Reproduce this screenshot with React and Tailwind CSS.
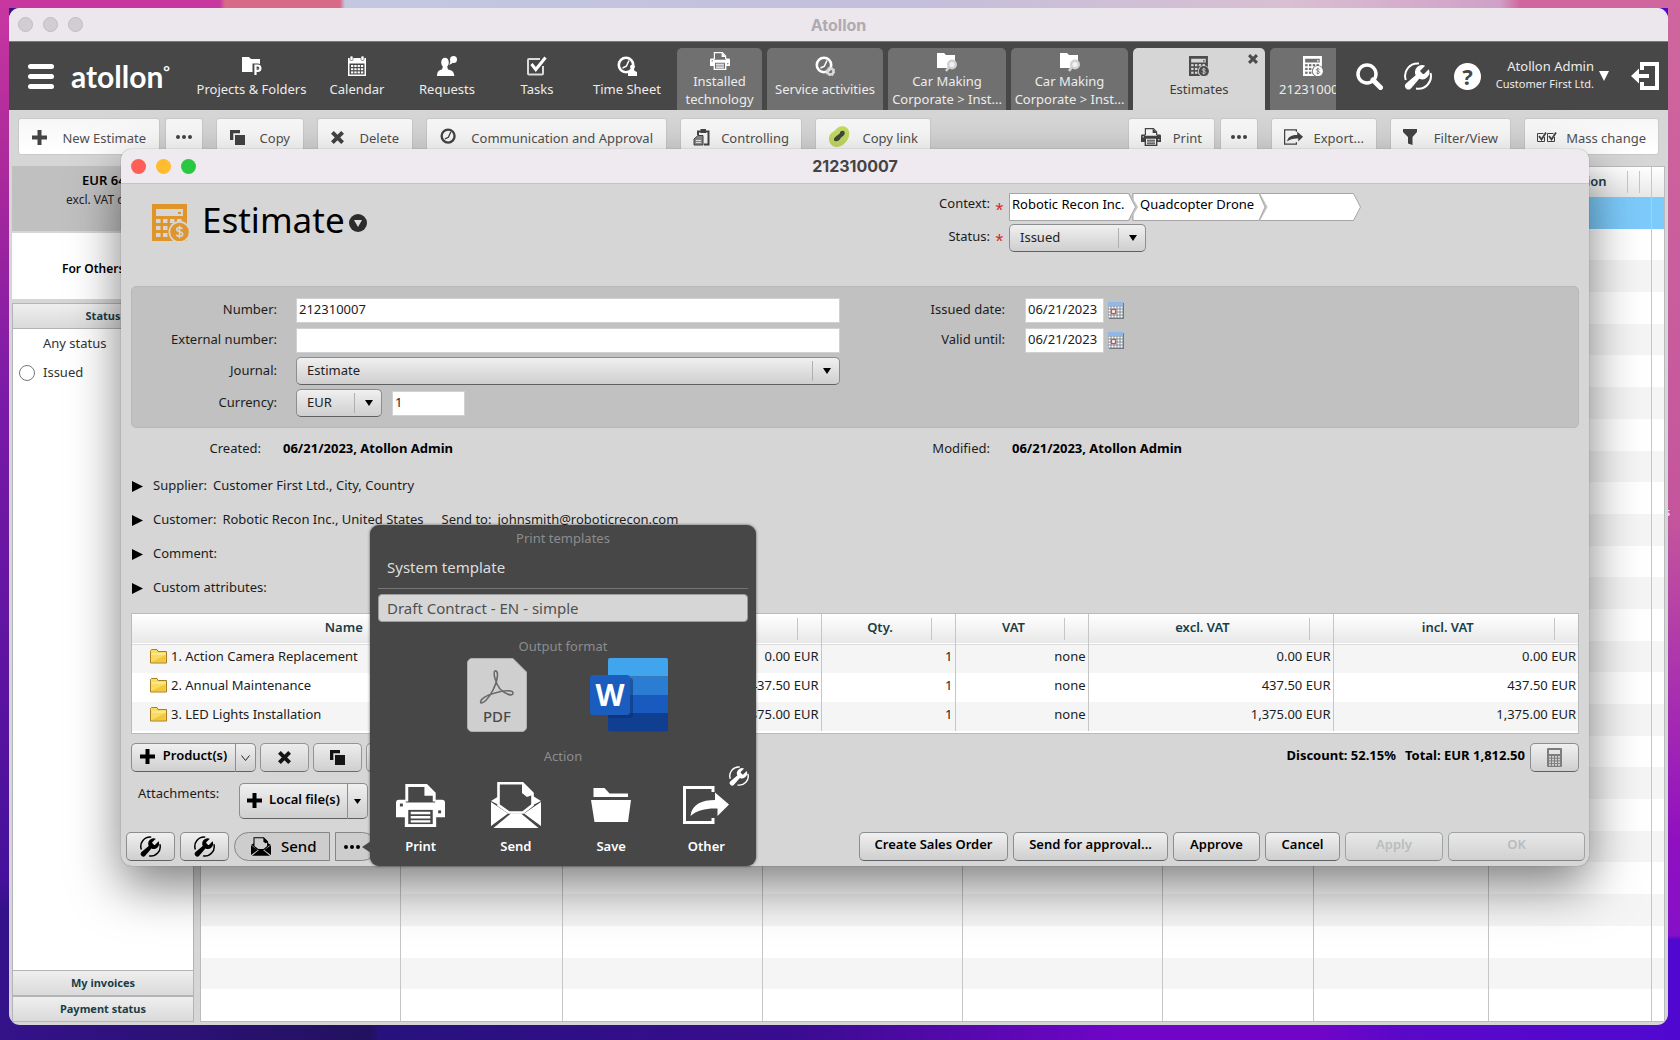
import clsx from 'clsx';

/* ---------- icons ---------- */

function FolderBadgeIcon({ badge }) {
  return (
    <svg width="20" height="20" viewBox="0 0 20 20" fill="currentColor">
      <path d="M0 1h7l2 2h9v13H0z" />
      {badge === 'P' ? (
        <g fill="none">
          <path d="M13 19.500V10h3a2.800 2.800 0 0 1 0 5.600h-3" stroke="#474747" strokeWidth="5" />
          <path d="M13.500 19V9.500h2.200a2.700 2.700 0 0 1 0 5.400h-2.200" stroke="currentColor" strokeWidth="2.200" />
        </g>
      ) : (
        <g>
          <circle cx="15" cy="12.500" r="5" fill="#d0d0d0" />
          <circle cx="15" cy="12.500" r="2.600" fill="#f2f2f2" />
          <path d="M12 15l-3 4" stroke="#d0d0d0" strokeWidth="2.500" />
        </g>
      )}
    </svg>
  );
}

function CalendarIcon() {
  return (
    <svg width="20" height="20" viewBox="0 0 20 20" fill="currentColor">
      <path fillRule="evenodd" d="M1 2h18v18H1zM2.500 7.500v11h15v-11z" />
      <rect x="3" y="0" width="3" height="4.500" rx="1" stroke="#474747" strokeWidth=".6" />
      <rect x="14" y="0" width="3" height="4.500" rx="1" stroke="#474747" strokeWidth=".6" />
      {[9, 12.200, 15.400].map((y) =>
        [4, 7.300, 10.600, 13.900].map((x) => <rect key={`${x}-${y}`} x={x} y={y} width="2.300" height="2" />)
      )}
    </svg>
  );
}

function RequestIcon() {
  return (
    <svg width="20" height="20" viewBox="0 0 20 20" fill="currentColor">
      <ellipse cx="8" cy="6.500" rx="3.800" ry="4.800" />
      <path d="M6 10h4l1 3.500c4 .8 6 2 6.300 6.500H0c.200-4.500 1.500-5.700 5-6.500z" />
      <circle cx="16.500" cy="3.600" r="3.500" />
      <path d="M13.500 5l-1.300 4 3.500-2z" />
    </svg>
  );
}

function TaskIcon() {
  return (
    <svg width="20" height="20" viewBox="0 0 20 20" fill="none" stroke="currentColor">
      <path d="M16 10v7.500a1 1 0 0 1-1 1H2a1 1 0 0 1-1-1V4a1 1 0 0 1 1-1h11" strokeWidth="2" opacity=".8" />
      <path d="M4.500 8l4.300 5.500L18.500 1.500" strokeWidth="3" />
    </svg>
  );
}

function ClockIcon({ badge, size = 20 }) {
  return (
    <svg width={size} height={size} viewBox="0 0 20 20" fill="currentColor">
      <circle cx="9" cy="9" r="7.200" fill="none" stroke="currentColor" strokeWidth="2.600" />
      <path d="M12 4.500L9.300 10.300 5.500 12" fill="none" stroke="currentColor" strokeWidth="1.500" />
      {badge === 'person' && (
        <path d="M15.500 8.500a2.400 2.400 0 0 1 1.500 4.300c0 1.700.400 2.300 3 3.200v4h-9v-4c2.500-.900 3-1.500 3-3.200a2.400 2.400 0 0 1 1.500-4.300z" />
      )}
      {badge === 'gear' && (
        <g>
          <circle cx="15.500" cy="15.500" r="3" fill="none" stroke="#d8d8d8" strokeWidth="2.500" />
          <circle cx="15.500" cy="15.500" r="4.100" fill="none" stroke="#d8d8d8" strokeWidth="1.400" strokeDasharray="1.600 1.600" />
        </g>
      )}
    </svg>
  );
}

function PrinterIcon({ width = 20, height = 18, hole = '#707070' }) {
  return (
    <svg width={width} height={height} viewBox="0 0 50 44" preserveAspectRatio="none" fill="currentColor">
      <path d="M11 18V1.500h20l8 8V18" fill={hole} stroke="currentColor" strokeWidth="3" />
      <path d="M29 1l11 11H29z" />
      <path d="M3 16h7v3h30v-3h7a3 3 0 0 1 3 3v15H0V19a3 3 0 0 1 3-3z" />
      <rect x="4" y="20" width="3" height="3" fill={hole} />
      <rect x="43" y="27" width="3" height="3" fill={hole} />
      <path d="M9 24h32v20H9z" />
      <path d="M12.500 26.500h25V41h-25z" fill={hole} />
      <path d="M15 28.500h20v2.500H15zM15 32.700h20v2.500H15zM15 37h20v2.500H15z" />
    </svg>
  );
}

function MailIcon({ width = 50, height = 46, hole = '#474747' }) {
  return (
    <svg width={width} height={height} viewBox="0 0 50 46" fill="currentColor">
      <path d="M0 19l8-5v9zM50 19l-8-5v9z" />
      <path d="M0 20l17 11.500L0 44zM50 20L33 31.500 50 44z" />
      <path d="M2.500 46L20 31.500h10L47.500 46z" />
      <path d="M7.500 23V1.300h24l10 10V23l-9.500 7.500H18z" fill={hole} stroke="currentColor" strokeWidth="2.600" />
      <path d="M31 1l11.500 11.500L36 15l-5-4z" />
    </svg>
  );
}

function SaveFolderIcon() {
  return (
    <svg width="40" height="34" viewBox="0 0 40 34" fill="currentColor">
      <path d="M2.500 9V0h11l5 5.500H37V9z" />
      <path d="M0 12h40l-3 22H3.500z" />
    </svg>
  );
}

function ShareIcon({ width = 46, height = 38 }) {
  return (
    <svg width={width} height={height} viewBox="0 0 46 38" fill="currentColor">
      <path d="M30 6V1.500H1.500v35H30V32" fill="none" stroke="currentColor" strokeWidth="3" />
      <path d="M7.500 30C9 18 19 14 32 14V6.500L46 18.500 34.500 30v-7.500C24 22 14 24 7.500 30z" />
    </svg>
  );
}

function WrenchIcon({ size = 28 }) {
  return (
    <svg width={size} height={size} viewBox="0 0 28 28" fill="currentColor">
      <path d="M1.800 18A12.500 12.500 0 0 1 15 1.500M26.500 11A12.500 12.500 0 0 1 12 26.500" fill="none" stroke="currentColor" strokeWidth="2" />
      <path
        transform="translate(-1 .500) scale(1.200)"
        d="M14.700 6.300a1 1 0 0 0 0 1.400l1.600 1.600a1 1 0 0 0 1.400 0l3.770-3.770a6 6 0 0 1-7.940 7.940l-6.910 8.100a2.600 2.600 0 0 1-4.100-4.100l8.010-6.910a6 6 0 0 1 7.940-7.940l-3.760 3.760z"
      />
    </svg>
  );
}

function EstimateIcon({ size = 20, hole = '#707070' }) {
  return (
    <svg width={size} height={size} viewBox="0 0 37 37" fill="currentColor">
      <path d="M0 0h35v37H0z" />
      <path d="M4 5h27v7H4z" fill={hole} />
      <path d="M26 8h3v2h-3z" />
      {[15, 22, 29].map((y) =>
        [4, 11, 18, 25].map((x) => <rect key={`${x}-${y}`} x={x} y={y} width="4.500" height="4" fill={hole} />)
      )}
      <circle cx="27.500" cy="28" r="11" fill={hole} />
      <circle cx="27.500" cy="28" r="9.300" />
      <path
        d="M30.500 25.200c-.600-1.200-1.600-1.600-3-1.600-1.700 0-2.800.700-2.800 2 0 2.900 6 1.500 6 4.600 0 1.400-1.300 2.200-3.200 2.200-1.600 0-2.700-.600-3.200-1.800M27.500 21.700v12.600"
        fill="none"
        stroke={hole}
        strokeWidth="1.600"
      />
    </svg>
  );
}

function PlusIcon() {
  return (
    <svg width="15" height="15" viewBox="0 0 15 15" fill="currentColor">
      <path d="M5.500 0h4v5.500H15v4H9.500V15h-4V9.500H0v-4h5.500z" />
    </svg>
  );
}

function CrossIcon({ size = 15 }) {
  return (
    <svg width={size} height={size} viewBox="0 0 14 14" fill="none" stroke="currentColor" strokeWidth="4.200">
      <path d="M1.500 1.500l11 11M12.500 1.500l-11 11" />
    </svg>
  );
}

function CopyIcon() {
  return (
    <svg width="15" height="15" viewBox="0 0 15 15" fill="currentColor">
      <path d="M0 0h10v3.300H3.300V10H0z" />
      <path d="M5 5h10v10H5z" />
    </svg>
  );
}

function DotsIcon() {
  return (
    <svg width="16" height="4" viewBox="0 0 16 4" fill="currentColor">
      <circle cx="2" cy="2" r="2" />
      <circle cx="8" cy="2" r="2" />
      <circle cx="14" cy="2" r="2" />
    </svg>
  );
}

function ClipboardIcon() {
  return (
    <svg width="17" height="17" viewBox="0 0 17 17" fill="none" stroke="currentColor">
      <path d="M5 6V2.500h10.500v13H11" strokeWidth="2" />
      <path d="M7.500 0h5.500v4H7.500z" fill="currentColor" stroke="none" />
      <path d="M1 10l4-3.500h5v9.500H1z" fill="#8b8b8b" strokeWidth="1" />
      <path d="M3 11.500h5M3 13.500h5" stroke="#eee" />
    </svg>
  );
}

function CopyLinkIcon() {
  return (
    <svg width="22" height="22" viewBox="0 0 22 22">
      <path d="M10 1.500c4-2.500 10-1 11 4 1 4-1 9-5 12.500-5 4-11 4-14-1C0 13 1 8.500 4 6.500c2.500-1 3-3 6-5z" fill="#c5dc62" />
      <path d="M12 7c0-2.500 3.500-3 4.500-1.200 1 2.500-1.500 4.700-3.500 5.700-1.500 4-6.500 5-7 2.500-.5-3 4-4.500 6-7z" fill="#3f4a3a" />
    </svg>
  );
}

function FunnelIcon() {
  return (
    <svg width="14" height="16" viewBox="0 0 14 16" fill="currentColor">
      <path d="M0 0h14v3L9.500 8v8L5 14.500V8L0 3z" />
    </svg>
  );
}

function DoubleCheckIcon() {
  return (
    <svg width="20" height="10" viewBox="0 0 20 10" fill="none" stroke="currentColor">
      <path d="M7.500 5v4.500H.5v-8h6M17.500 5v4.500h-7v-8h6" />
      <path d="M2 4l2.500 3.500L9 .5M12 4l2.500 3.500L19 .5" strokeWidth="1.800" />
    </svg>
  );
}

function MiniCalendarIcon() {
  return (
    <svg width="16" height="17" viewBox="0 0 16 17">
      <path d="M1 1h15v16H1z" fill="#74777c" />
      <path d="M0 0h15v4.500H0z" fill="#8fb8ea" />
      <path d="M0 4h15v12H0z" fill="#7b8b94" />
      {[4.500, 7.500, 10.500, 13.500].map((y) =>
        [0.5, 3.500, 6.500, 9.500, 12.500].map((x) => <rect key={`${x}-${y}`} x={x} y={y} width="2" height="2" fill="#fff" />)
      )}
      <rect x="3.500" y="7.500" width="4" height="4" fill="#fff" stroke="#e0484a" strokeWidth="1.300" />
    </svg>
  );
}

function YellowFolderIcon() {
  return (
    <svg width="17" height="15" viewBox="0 0 17 15">
      <path d="M.5 2.500V1.500l1-1H7l1 2h8.500v11.500H.5z" fill="#f8dc62" stroke="#a97d22" />
      <path d="M1.500 5h14" stroke="#fff3b0" />
      <path d="M1.500 13L15.500 6v7z" fill="#f2c838" />
    </svg>
  );
}

function CalculatorIcon() {
  return (
    <svg width="15" height="19" viewBox="0 0 15 19">
      <path d="M0 1a1 1 0 0 1 1-1h13a1 1 0 0 1 1 1v17a1 1 0 0 1-1 1H1a1 1 0 0 1-1-1z" fill="#7d7d7d" />
      <path d="M2 2h11v4H2z" fill="#e4e4e4" />
      {[8, 10.700, 13.400, 16].map((y) =>
        [2, 5, 8, 11].map((x) => <rect key={`${x}-${y}`} x={x} y={y} width="2" height="1.700" fill="#d0d0d0" />)
      )}
    </svg>
  );
}

function DownTriangle({ width = 10, height = 6 }) {
  return (
    <svg width={width} height={height} viewBox="0 0 10 6" preserveAspectRatio="none" fill="currentColor">
      <path d="M0 0h10L5 6z" />
    </svg>
  );
}

function PdfIcon() {
  return (
    <svg width="60" height="74" viewBox="0 0 60 74">
      <path d="M5 .5h41L59.500 14v55a4.500 4.500 0 0 1-4.500 4.500H5A4.500 4.500 0 0 1 .5 69V5A4.500 4.500 0 0 1 5 .5z" fill="#cfcfcf" stroke="#b0b0b0" />
      <path
        d="M28 13c4-1 3 9-2 19-4 8-9 13-12 13-2-3 5-8 14-10 9-3 18-3 18 0 0 4-8 1-13-4-5-6-7-17-5-18z"
        fill="none"
        stroke="#6a6a6a"
        strokeWidth="1.600"
      />
      <text x="30" y="64" textAnchor="middle" fill="#4a4a4a" fontSize="15" fontFamily="Noto Sans" fontWeight="500">
        PDF
      </text>
    </svg>
  );
}

function WordIcon() {
  return (
    <svg width="78" height="74" viewBox="0 0 78 74">
      <path d="M18 18.500V2a2 2 0 0 1 2-2h56a2 2 0 0 1 2 2v16.500z" fill="#41a5ee" />
      <path d="M18 18.500h60V37H18z" fill="#2b7cd3" />
      <path d="M18 37h60v18H18z" fill="#185abd" />
      <path d="M18 55h60v16.500a2 2 0 0 1-2 2H20a2 2 0 0 1-2-2z" fill="#103f91" />
      <path d="M18 20h22a3 3 0 0 1 3 3v34a3 3 0 0 1-3 3H18z" fill="#0c2d6b" opacity=".5" />
      <rect x="0" y="17" width="40" height="40" rx="3" fill="#1a5dbe" />
      <text x="20" y="48" textAnchor="middle" fill="#fff" fontSize="30" fontFamily="Noto Sans" fontWeight="700">
        W
      </text>
    </svg>
  );
}

/* ---------- main window ---------- */

const modules = [
  { label: 'Calendar', icon: <CalendarIcon /> },
  { label: 'Requests', icon: <RequestIcon /> },
  { label: 'Tasks', icon: <TaskIcon /> },
  { label: 'Time Sheet', icon: <ClockIcon badge="person" /> },
];

const tabs = [
  { id: 1, lines: ['Installed', 'technology'], icon: <PrinterIcon />, width: 'w-[85px]' },
  { id: 2, lines: ['Service activities'], icon: <ClockIcon badge="gear" />, width: 'w-[116px]' },
  { id: 3, lines: ['Car Making', 'Corporate > Inst...'], icon: <FolderBadgeIcon badge="search" />, width: 'w-[118px]' },
  { id: 4, lines: ['Car Making', 'Corporate > Inst...'], icon: <FolderBadgeIcon badge="search" />, width: 'w-[117px]' },
  { id: 5, lines: ['Estimates'], icon: <EstimateIcon hole="#d6d6d6" />, width: 'w-[132px]', active: true },
  { id: 6, lines: ['212310007'], icon: <EstimateIcon />, width: 'w-[85px]' },
];

function ModuleButton({ icon, label, className }) {
  return (
    <button className={clsx('flex h-full shrink-0 flex-col items-center pt-[14px] text-[13px] leading-5 text-[#ececec]', className)}>
      <span className="text-white">{icon}</span>
      <span className="mt-[3px] whitespace-nowrap">{label}</span>
    </button>
  );
}

function Tab({ tab }) {
  const twoLines = tab.lines.length > 1;
  return (
    <button
      className={clsx(
        'relative flex h-[62px] shrink-0 flex-col items-center rounded-t-[5px] text-[13px]',
        tab.width,
        twoLines ? 'pt-1 leading-[18px]' : 'pt-2 leading-5',
        tab.active ? 'bg-[#d6d6d6] text-[#3c3c3c]' : 'bg-[#707070] text-[#ececec]'
      )}
    >
      <span className={clsx('h-5', tab.active ? 'text-[#4c4c4c]' : 'text-white')}>{tab.icon}</span>
      <span className={clsx('whitespace-nowrap', twoLines ? '' : 'mt-[3px]')}>
        {tab.lines.map((line) => (
          <span key={line} className="block">{line}</span>
        ))}
      </span>
      {tab.active && (
        <span className="absolute right-[7px] top-[6px] text-[#4c4c4c]">
          <CrossIcon size={10} />
        </span>
      )}
    </button>
  );
}

function TopNav() {
  return (
    <header className="flex h-[68px] shrink-0 items-center bg-[#474747] text-white">
      <button aria-label="Menu" className="ml-[19px] flex w-[26px] shrink-0 flex-col gap-[5px]">
        <span className="h-[5px] rounded-full bg-white" />
        <span className="h-[5px] rounded-full bg-white" />
        <span className="h-[5px] rounded-full bg-white" />
      </button>
      <a href="#" className="ml-[17px] flex w-[120px] shrink-0 items-start font-['Lato',sans-serif] text-[30px] leading-[34px] font-bold">
        atollon<span className="text-base leading-6">°</span>
      </a>
      <ModuleButton icon={<FolderBadgeIcon badge="P" />} label="Projects & Folders" className="w-[121px]" />
      {modules.map((m) => (
        <ModuleButton key={m.label} icon={m.icon} label={m.label} className="w-[90px]" />
      ))}
      <div className="ml-[5px] flex h-full min-w-0 flex-1 items-end gap-[5px] overflow-hidden">
        {tabs.map((tab) => (
          <Tab key={tab.id} tab={tab} />
        ))}
      </div>
      <div className="flex w-[332px] shrink-0 items-center pl-5 pr-[9px]">
        <button aria-label="Search">
          <svg width="27" height="27" viewBox="0 0 27 27" fill="none" stroke="currentColor">
            <circle cx="11" cy="11" r="9" strokeWidth="3.500" />
            <path d="M17 17l7.500 7.500" strokeWidth="5" strokeLinecap="round" />
          </svg>
        </button>
        <button aria-label="Settings" className="ml-[21px]">
          <WrenchIcon />
        </button>
        <button aria-label="Help" className="ml-[22px] flex size-[27px] items-center justify-center rounded-full bg-white text-[22px] leading-6 font-bold text-[#474747]">
          ?
        </button>
        <div className="ml-auto pb-[2px] text-right text-[#ececec]">
          <div className="text-[13px] leading-[18px]">Atollon Admin</div>
          <div className="text-[11px] leading-[18px]">Customer First Ltd.</div>
        </div>
        <button aria-label="Account menu" className="ml-[5px]">
          <DownTriangle width={10} height={10} />
        </button>
        <button aria-label="Log out" className="ml-[22px]">
          <svg width="28" height="28" viewBox="0 0 28 28">
            <path d="M11 8V2h15v24H11v-6" fill="none" stroke="currentColor" strokeWidth="4" />
            <path d="M0 14l8-7.500V12h10v4H8v5.500z" fill="currentColor" />
          </svg>
        </button>
      </div>
    </header>
  );
}

function ToolButton({ icon, children, label, className }) {
  return (
    <button
      aria-label={label}
      className={clsx(
        'flex h-[37px] shrink-0 items-center rounded-[3px] border border-[#cacaca] bg-gradient-to-b from-[#f7f7f7] to-white pt-px text-[13px] text-[#505050]',
        className
      )}
    >
      <span className="flex shrink-0 items-center text-[#444]">{icon}</span>
      {children && <span className="flex-1 pt-[3px] text-right whitespace-nowrap">{children}</span>}
    </button>
  );
}

function Toolbar() {
  return (
    <div className="flex shrink-0 px-[9px] pt-2 pb-[11px]">
      <ToolButton icon={<PlusIcon />} className="w-[142px] px-[13px]">New Estimate</ToolButton>
      <ToolButton icon={<DotsIcon />} label="More" className="ml-[5px] w-[38px] justify-center" />
      <ToolButton icon={<CopyIcon />} className="ml-[13px] w-[88px] px-[13px]">Copy</ToolButton>
      <ToolButton icon={<CrossIcon size={13} />} className="ml-[13px] w-[96px] px-[13px]">Delete</ToolButton>
      <ToolButton icon={<ClockIcon size={18} />} className="ml-[13px] w-[241px] px-[13px]">Communication and Approval</ToolButton>
      <ToolButton icon={<ClipboardIcon />} className="ml-[13px] w-[122px] px-3">Controlling</ToolButton>
      <ToolButton icon={<CopyLinkIcon />} className="ml-[13px] w-[116px] px-3">Copy link</ToolButton>
      <ToolButton icon={<PrinterIcon hole="#fafafa" />} className="ml-auto w-[87px] px-3">Print</ToolButton>
      <ToolButton icon={<DotsIcon />} label="More print options" className="ml-[5px] w-[38px] justify-center" />
      <ToolButton icon={<ShareIcon width={19} height={16} />} className="ml-[13px] w-[106px] px-3">Export...</ToolButton>
      <ToolButton icon={<FunnelIcon />} className="ml-[13px] w-[121px] px-3">Filter/View</ToolButton>
      <ToolButton icon={<DoubleCheckIcon />} className="ml-[13px] w-[135px] px-3">Mass change</ToolButton>
    </div>
  );
}

function SideHeading({ children }) {
  return (
    <button className="h-[26px] w-full shrink-0 border border-[#b1b5b7] bg-gradient-to-b from-[#efefef] to-[#dadada] text-[11px] font-bold text-[#1b3d47]">
      {children}
    </button>
  );
}

function Sidebar() {
  return (
    <aside className="flex w-[182px] shrink-0 flex-col">
      <div className="h-[65px] shrink-0 bg-[#c0c0c0] pt-1 whitespace-nowrap">
        <div className="pl-[70px] text-[13px] leading-5 font-semibold text-black">EUR 64</div>
        <div className="pl-[54px] text-xs leading-5 text-[#222]">excl. VAT o</div>
      </div>
      <div className="mt-[2px] flex h-[66px] shrink-0 items-center bg-white pt-[6px] pl-[50px] text-xs font-semibold text-black">For Others</div>
      <div className="mt-1 flex flex-col">
        <SideHeading>Status</SideHeading>
      </div>
      <div className="flex-1 border-x border-[#b1b5b7] bg-white text-[13px] text-[#333]">
        <div className="flex h-[29px] items-center pl-[30px]">Any status</div>
        <label className="flex h-[30px] items-center gap-2 pl-[6px]">
          <input type="radio" name="status" className="size-4 appearance-none rounded-full border border-[#777] bg-white" />
          Issued
        </label>
      </div>
      <SideHeading>My invoices</SideHeading>
      <SideHeading>Payment status</SideHeading>
    </aside>
  );
}

const listColumns = ['w-[199px]', 'w-[162px]', 'w-[200px]', 'w-[200px]', 'w-[200px]', 'w-[151px]', 'w-[175px]', 'w-[163px]', ''];

function EstimateList() {
  return (
    <div className="min-w-0 flex-1 border border-[#b8bcbe] bg-white">
      <table className="h-full w-full table-fixed border-collapse">
        <colgroup>
          {listColumns.map((w, i) => (
            <col key={i} className={w} />
          ))}
        </colgroup>
        <thead>
          <tr className="h-[30px] bg-gradient-to-b from-white to-[#e8e8e8]">
            {listColumns.map((w, i) => (
              <th key={i} className={clsx('p-0 text-[13px] font-semibold text-[#1b3d47]', i < 8 && 'border-r border-[#c4c6c7]')}>
                {i === 7 && (
                  <div className="flex h-[22px] items-center">
                    <span className="flex-1 pr-5 text-right">Description</span>
                    <span className="h-full w-3 border-l border-[#c4c6c7]" />
                    <span className="h-full w-3 border-l border-[#c4c6c7]" />
                  </div>
                )}
              </th>
            ))}
          </tr>
        </thead>
        <tbody>
          {Array.from({ length: 26 }, (_, row) => (
            <tr key={row} className={row === 0 ? 'bg-[#7dcbfb]' : row % 2 ? 'bg-white' : 'bg-[#f5f5f5]'}>
              {listColumns.map((w, i) => (
                <td key={i} className={clsx('p-0', i < 8 && 'border-r border-[#c4c6c7]')} />
              ))}
            </tr>
          ))}
        </tbody>
      </table>
    </div>
  );
}

/* ---------- estimate dialog ---------- */

const raised = 'border border-[#8a8e90] border-b-[#5f6264] bg-gradient-to-b from-[#f0f0f0] to-[#cfcfcf]';

function Select({ id, value, className }) {
  return (
    <div className={clsx('relative h-7', className)}>
      <select id={id} defaultValue={value} className={clsx('h-full w-full appearance-none rounded-[5px] pb-px pl-[10px] text-[13px] text-[#222]', raised)}>
        <option>{value}</option>
      </select>
      <span className="pointer-events-none absolute top-1 right-0 flex h-5 w-7 items-center justify-center border-l border-[#b0b0b0] text-black">
        <DownTriangle width={8} height={6} />
      </span>
    </div>
  );
}

function ContextPath() {
  return (
    <div className="relative flex h-7 w-[352px] text-[13px] leading-[22px] text-black">
      <svg className="absolute inset-0" width="352" height="28" viewBox="0 0 352 28" fill="#fff" stroke="#a5a5a5">
        <path d="M248 .5h96.500l7 13.500-7 13.500H248z" />
        <path d="M124 .5h126l7.500 13.500-7.500 13.500H124z" stroke="#c4c4c4" strokeWidth="2" />
        <path d="M124 .5h126l6 13.500-6 13.500H124z" />
        <path d="M.5.5h119l8.500 13.500-8.500 13.500H.5z" stroke="#c4c4c4" strokeWidth="2" />
        <path d="M.5.5h119l7 13.500-7 13.500H.5z" />
      </svg>
      <a href="#" className="relative w-[131px] pl-[3px] whitespace-nowrap">Robotic Recon Inc.</a>
      <a href="#" className="relative w-[125px] whitespace-nowrap">Quadcopter Drone</a>
      <input aria-label="Context" className="relative h-6 w-[84px] bg-transparent" />
    </div>
  );
}

function Required() {
  return <span className="w-[19px] pt-[7px] text-center font-['Liberation_Sans',sans-serif] text-xl leading-5 text-[#d42a2a]">*</span>;
}

function DateRow({ id, label }) {
  return (
    <div className="flex h-[25px] items-center">
      <label htmlFor={id} className="w-[150px] pb-px text-right">{label}</label>
      <input id={id} defaultValue="06/21/2023" className="ml-5 h-[25px] w-[79px] border border-[#cfd1d2] bg-white px-[2px] pb-[3px]" />
      <button aria-label="Pick date" className="ml-1">
        <MiniCalendarIcon />
      </button>
    </div>
  );
}

function Details() {
  const label = 'w-[145px] shrink-0 pt-[2px] text-right';
  const input = 'h-[25px] border border-[#cfd1d2] bg-white px-[2px] pb-[3px]';
  return (
    <section className="mx-[10px] grid grid-cols-2 rounded-[5px] border border-[#b7b9ba] bg-[#c1c1c1] pt-[11px] pb-[10px] text-[13px] text-[#1c1c1c]">
      <div className="pr-[15px]">
        <div className="flex h-[30px] items-start">
          <label htmlFor="number" className={label}>Number:</label>
          <input id="number" defaultValue="212310007" className={clsx(input, 'ml-[19px] flex-1')} />
        </div>
        <div className="flex h-[29px] items-start">
          <label htmlFor="external" className={label}>External number:</label>
          <input id="external" className={clsx(input, 'ml-[19px] flex-1')} />
        </div>
        <div className="flex h-8 items-start">
          <label htmlFor="journal" className="w-[145px] shrink-0 pt-1 text-right">Journal:</label>
          <Select id="journal" value="Estimate" className="ml-[19px] flex-1" />
        </div>
        <div className="flex h-7 items-center">
          <label htmlFor="currency" className="w-[145px] shrink-0 text-right">Currency:</label>
          <Select id="currency" value="EUR" className="ml-[19px] w-[86px]" />
          <input aria-label="Exchange rate" defaultValue="1" className={clsx(input, 'ml-[10px] w-[73px]')} />
        </div>
      </div>
      <div className="flex flex-col gap-[5px]">
        <DateRow id="issued" label="Issued date:" />
        <DateRow id="valid" label="Valid until:" />
      </div>
    </section>
  );
}

function Disclosure({ label, children }) {
  return (
    <div className="flex h-[34px] items-center pl-[11px] text-[13px] text-[#1c1c1c]">
      <button className="flex items-center gap-[10px]">
        <svg width="11" height="11" viewBox="0 0 11 11" fill="#000">
          <path d="M0 0l11 5.500L0 11z" />
        </svg>
        {label}
      </button>
      {children}
    </div>
  );
}

const itemColumns = [
  { title: 'Name', width: 'w-[440px]' },
  { title: 'Price', width: 'w-[249px]' },
  { title: 'Qty.', width: 'w-[134px]' },
  { title: 'VAT', width: 'w-[133px]' },
  { title: 'excl. VAT', width: 'w-[245px]' },
  { title: 'incl. VAT', width: '' },
];

const items = [
  ['1. Action Camera Replacement', '0.00 EUR', '1', 'none', '0.00 EUR', '0.00 EUR'],
  ['2. Annual Maintenance', '437.50 EUR', '1', 'none', '437.50 EUR', '437.50 EUR'],
  ['3. LED Lights Installation', '1,375.00 EUR', '1', 'none', '1,375.00 EUR', '1,375.00 EUR'],
];

function ItemsTable() {
  return (
    <div className="mx-[10px] mt-2 border border-[#b8bcbe] bg-white pb-[2px]">
      <table className="w-full table-fixed border-collapse text-[13px] text-[#1c1c1c]">
        <colgroup>
          {itemColumns.map((c) => (
            <col key={c.title} className={c.width} />
          ))}
        </colgroup>
        <thead>
          <tr className="h-[30px] border-b border-[#dcdcdc] bg-gradient-to-b from-white to-[#e8e8e8]">
            {itemColumns.map((c) => (
              <th key={c.title} className="border-r border-[#c4c6c7] p-0 font-semibold text-[#1b3d47] last:border-r-0">
                <div className="flex h-[22px] items-center">
                  <span className="flex-1 pb-[3px] pl-2">{c.title}</span>
                  <span className="h-full w-6 border-l border-[#c4c6c7]" />
                </div>
              </th>
            ))}
          </tr>
        </thead>
        <tbody>
          {items.map((row) => (
            <tr key={row[0]} className="h-[29px] odd:bg-[#f5f5f5]">
              {row.map((cell, i) =>
                i === 0 ? (
                  <td key={i} className="border-r border-[#c4c6c7] p-0 pl-[18px]">
                    <div className="flex items-center gap-1 pb-1">
                      <YellowFolderIcon />
                      {cell}
                    </div>
                  </td>
                ) : (
                  <td key={i} className="border-r border-[#c4c6c7] p-0 pr-[2px] pb-1 text-right last:border-r-0">{cell}</td>
                )
              )}
            </tr>
          ))}
        </tbody>
      </table>
    </div>
  );
}

function ActionButton({ children, className, height = 'h-[29px]', ...props }) {
  return (
    <button
      className={clsx(
        'flex shrink-0 items-center justify-center rounded-[5px] text-[13px] font-semibold whitespace-nowrap text-black disabled:text-[#a9b3b3] disabled:opacity-70',
        raised,
        height,
        className
      )}
      {...props}
    >
      {children}
    </button>
  );
}

const outputs = [
  { label: 'Print', icon: <PrinterIcon width={49} height={43} hole="#474747" /> },
  { label: 'Send', icon: <MailIcon /> },
  { label: 'Save', icon: <SaveFolderIcon /> },
  { label: 'Other', icon: <ShareIcon /> },
];

function PrintPopover() {
  return (
    <div className="absolute bottom-0 left-[249px] flex h-[341px] w-[386px] flex-col rounded-[9px] bg-[#474747] shadow-[0_0_3px_rgba(0,0,0,.6)]">
      <svg className="absolute bottom-[13px] -left-2" width="9" height="12" viewBox="0 0 9 12" fill="#474747">
        <path d="M9 0v12L0 6z" />
      </svg>
      <div className="pt-[3px] text-center text-[13px] leading-5 text-[#8c8c8c]">Print templates</div>
      <div className="mx-2 flex flex-col border-b border-[#757575] pt-[6px] pb-2">
        <button className="h-[26px] pl-[9px] text-left text-[15px] text-[#dedede]">System template</button>
      </div>
      <button className="mx-2 mt-[5px] h-7 rounded-[4px] border border-[#9c9c9c] bg-[#d6d6d6] pl-2 text-left text-[15px] leading-6 text-[#505050]">
        Draft Contract - EN - simple
      </button>
      <div className="mt-[14px] text-center text-[13px] leading-5 text-[#8c8c8c]">Output format</div>
      <div className="mt-[2px] flex gap-[63px] pl-[97px]">
        <button aria-label="PDF">
          <PdfIcon />
        </button>
        <button aria-label="Word">
          <WordIcon />
        </button>
      </div>
      <div className="mt-[14px] text-center text-[13px] leading-5 text-[#8c8c8c]">Action</div>
      <div className="grid grid-cols-4 pr-[2px] pl-[3px]">
        {outputs.map((o) => (
          <button key={o.label} className="flex flex-col items-center pt-3 text-[13px] font-semibold text-white">
            <span className="flex h-[54px] items-center">{o.icon}</span>
            <span className="mt-1 leading-5">{o.label}</span>
          </button>
        ))}
      </div>
      <button aria-label="Template settings" className="absolute top-[241px] right-[7px] text-white">
        <WrenchIcon size={20} />
      </button>
    </div>
  );
}

function EstimateDialog() {
  return (
    <div
      role="dialog"
      aria-label="212310007"
      className="absolute top-[141px] right-[79px] left-[112px] rounded-[11px] bg-[#d6d6d6] shadow-[0_20px_50px_rgba(0,0,0,.5),0_0_1px_rgba(0,0,0,.5)]"
    >
      <div className="flex h-[35px] items-center rounded-t-[11px] border-b border-[#c6c2c6] bg-[#efeaf0] pl-[10px]">
        <div className="flex w-[65px] gap-[10px]">
          <span className="size-[15px] rounded-full bg-[#ff5f57]" />
          <span className="size-[15px] rounded-full bg-[#febc2e]" />
          <span className="size-[15px] rounded-full bg-[#28c840]" />
        </div>
        <h1 className="flex-1 pr-[75px] text-center font-['Inter',sans-serif] text-base font-bold text-[#444]">212310007</h1>
      </div>

      <div className="grid h-[102px] grid-cols-2">
        <div className="flex items-start pt-5 pl-[31px]">
          <span className="text-[#e0952b]">
            <EstimateIcon size={37} hole="#d6d6d6" />
          </span>
          <h2 className="ml-[13px] text-[35px] leading-8 text-black">Estimate</h2>
          <button aria-label="Estimate type" className="mt-[10px] ml-1 flex size-[18px] items-center justify-center rounded-full bg-[#2c2c2c] text-[#ddd]">
            <DownTriangle width={8} height={7} />
          </button>
        </div>
        <div className="flex flex-col gap-[3px] pt-[9px] text-[13px] text-[#1c1c1c]">
          <div className="flex items-start">
            <label className="w-[135px] pt-px text-right">Context:</label>
            <Required />
            <ContextPath />
          </div>
          <div className="flex items-start">
            <label htmlFor="status" className="w-[135px] pt-[3px] text-right">Status:</label>
            <Required />
            <Select id="status" value="Issued" className="w-[137px]" />
          </div>
        </div>
      </div>

      <Details />

      <div className="grid h-[41px] grid-cols-2 items-center pt-px text-[13px] text-[#1c1c1c]">
        <div className="flex">
          <span className="w-[140px] text-right">Created:</span>
          <span className="ml-[22px] font-bold text-black">06/21/2023, Atollon Admin</span>
        </div>
        <div className="flex">
          <span className="w-[135px] text-right">Modified:</span>
          <span className="ml-[22px] font-bold text-black">06/21/2023, Atollon Admin</span>
        </div>
      </div>

      <Disclosure label="Supplier:">
        <span className="ml-[6px]">Customer First Ltd., City, Country</span>
      </Disclosure>
      <Disclosure label="Customer:">
        <span className="ml-[6px]">Robotic Recon Inc., United States</span>
        <span className="ml-[18px]">Send to:</span>
        <a href="#" className="ml-[6px]">johnsmith@roboticrecon.com</a>
      </Disclosure>
      <Disclosure label="Comment:" />
      <Disclosure label="Custom attributes:" />

      <ItemsTable />

      <div className="mt-[9px] flex items-center px-[10px]">
        <div className="flex">
          <ActionButton className="w-[104px] gap-2 rounded-r-none border-r-0 pb-[3px]">
            <PlusIcon /> Product(s)
          </ActionButton>
          <ActionButton aria-label="Product options" className="w-[21px] rounded-l-none">
            <svg width="9" height="6" viewBox="0 0 9 6" fill="none" stroke="#222">
              <path d="M.5.5l4 5 4-5" />
            </svg>
          </ActionButton>
        </div>
        <ActionButton aria-label="Remove" className="ml-1 w-[49px] opacity-90">
          <CrossIcon size={13} />
        </ActionButton>
        <ActionButton aria-label="Duplicate" className="ml-1 w-[49px] opacity-90">
          <CopyIcon />
        </ActionButton>
        <ActionButton aria-label="Move" className="ml-1 w-[49px] opacity-90" />
        <div className="ml-auto flex gap-[9px] pb-1 text-[13px] font-bold text-black">
          <span>Discount: 52.15%</span>
          <span>Total: EUR 1,812.50</span>
        </div>
        <ActionButton aria-label="Recalculate" className="ml-[5px] w-[49px]">
          <CalculatorIcon />
        </ActionButton>
      </div>

      <div className="mt-[11px] flex items-start pl-[17px]">
        <span className="w-[101px] text-[13px] leading-5 text-[#1c1c1c]">Attachments:</span>
        <ActionButton height="h-9" className="w-[108px] gap-[7px] rounded-r-none border-r-0 pb-[2px]">
          <PlusIcon /> Local file(s)
        </ActionButton>
        <ActionButton height="h-9" aria-label="Attachment source" className="w-[21px] rounded-l-none">
          <DownTriangle width={7} height={5} />
        </ActionButton>
      </div>

      <div className="mt-[13px] flex gap-[5px] pr-1 pb-[5px] pl-[5px]">
        <ActionButton aria-label="Print settings" className="w-[49px]">
          <WrenchIcon size={21} />
        </ActionButton>
        <ActionButton aria-label="Send settings" className="w-[49px]">
          <WrenchIcon size={21} />
        </ActionButton>
        <button className="flex h-[29px] w-[96px] items-center gap-[10px] rounded-l-full border border-[#858585] bg-[#cdcdcd] pl-4 text-[15px] font-medium text-black">
          <MailIcon width={20} height={19} hole="#cdcdcd" /> Send
        </button>
        <button aria-label="More send options" className="flex h-[29px] w-[42px] items-center rounded-r-full border border-[#858585] bg-[#cdcdcd] pl-2 text-black">
          <DotsIcon />
        </button>
        <div className="ml-auto flex gap-[5px]">
          <ActionButton className="w-[149px] pb-[3px]">Create Sales Order</ActionButton>
          <ActionButton className="w-[155px] pb-[3px]">Send for approval...</ActionButton>
          <ActionButton className="w-[87px] pb-[3px]">Approve</ActionButton>
          <ActionButton className="w-[75px] pb-[3px]">Cancel</ActionButton>
          <ActionButton className="w-[98px] pb-[3px]" disabled>Apply</ActionButton>
          <ActionButton className="w-[137px] pb-[3px]" disabled>OK</ActionButton>
        </div>
      </div>

      <PrintPopover />
    </div>
  );
}

export default function App() {
  return (
    <div className="relative flex h-screen flex-col overflow-hidden pt-2 pr-3 pb-[15px] pl-[9px] font-['Noto_Sans',sans-serif] [background:linear-gradient(90deg,#c837a0,#c837a0_220px,#d86a88_225px,#d86a88_340px,#c3c8e0_345px,#c3bfdc_900px,#d9bfd2_1290px,#d0a0c8_1500px,#d0669e_1520px,#d0669e)_0_0/100%_8px_no-repeat,linear-gradient(180deg,#c837a0,#a9289b_180px,#7a1aa8_400px,#45109b_880px,#34128a_910px,#34128a)_0_0/9px_100%_no-repeat,linear-gradient(180deg,#d0669e,#c4559c_520px,#9010c0_840px,#8510c8_935px,#5008d0_940px,#5008d0)_100%_0/12px_100%_no-repeat,linear-gradient(90deg,#34128a,#22115f_370px,#26127c_380px,#3a0c90_800px,#7005c8_1120px,#7005c8_1320px,#5a08c8_1400px,#5008d0)]">
      {/* end of a desktop file name, mostly hidden by the window */}
      <span className="absolute top-[504px] right-[10px] text-[11px] leading-4 text-white">s</span>

      <div className="relative flex min-h-0 flex-1 flex-col overflow-hidden rounded-[11px] bg-[#d6d6d6]">
        <div className="flex h-[34px] shrink-0 items-center border-b border-[#7d7a7d] bg-[#ece7ed] pl-[9px]">
          <div className="flex w-[65px] gap-[10px]">
            <span className="size-[15px] rounded-full border border-[#c0bbc1] bg-[#d2ccd3]" />
            <span className="size-[15px] rounded-full border border-[#c0bbc1] bg-[#d2ccd3]" />
            <span className="size-[15px] rounded-full border border-[#c0bbc1] bg-[#d2ccd3]" />
          </div>
          <div className="flex-1 pr-[74px] text-center font-['Inter',sans-serif] text-base font-bold text-[#b0aab1]">Atollon</div>
        </div>
        <TopNav />
        <Toolbar />
        <div className="flex min-h-0 flex-1 gap-[6px] px-[3px] pb-[3px]">
          <Sidebar />
          <EstimateList />
        </div>
        <EstimateDialog />
      </div>
    </div>
  );
}
